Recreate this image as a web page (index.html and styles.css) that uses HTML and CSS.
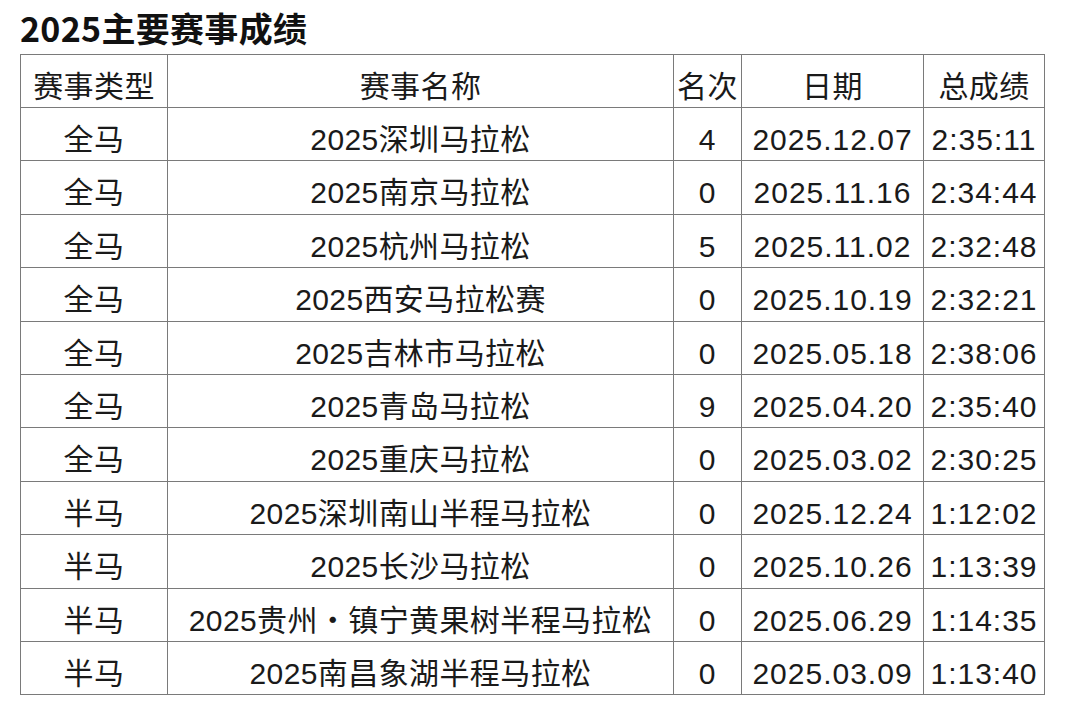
FILE: index.html
```html
<!DOCTYPE html>
<html lang="zh-CN">
<head>
<meta charset="utf-8">
<title>2025主要赛事成绩</title>
<link rel="stylesheet" href="styles.css">
</head>
<body>
<div class="page">
  <h1 class="title">2025主要赛事成绩</h1>
  <table class="results">
    <colgroup>
      <col class="c-type"><col class="c-name"><col class="c-rank"><col class="c-date"><col class="c-time">
    </colgroup>
    <thead>
      <tr><th>赛事类型</th><th>赛事名称</th><th>名次</th><th>日期</th><th>总成绩</th></tr>
    </thead>
    <tbody>
      <tr><td>全马</td><td>2025深圳马拉松</td><td class="num">4</td><td class="num">2025.12.07</td><td class="num">2:35:11</td></tr>
      <tr><td>全马</td><td>2025南京马拉松</td><td class="num">0</td><td class="num">2025.11.16</td><td class="num">2:34:44</td></tr>
      <tr><td>全马</td><td>2025杭州马拉松</td><td class="num">5</td><td class="num">2025.11.02</td><td class="num">2:32:48</td></tr>
      <tr><td>全马</td><td>2025西安马拉松赛</td><td class="num">0</td><td class="num">2025.10.19</td><td class="num">2:32:21</td></tr>
      <tr><td>全马</td><td>2025吉林市马拉松</td><td class="num">0</td><td class="num">2025.05.18</td><td class="num">2:38:06</td></tr>
      <tr><td>全马</td><td>2025青岛马拉松</td><td class="num">9</td><td class="num">2025.04.20</td><td class="num">2:35:40</td></tr>
      <tr><td>全马</td><td>2025重庆马拉松</td><td class="num">0</td><td class="num">2025.03.02</td><td class="num">2:30:25</td></tr>
      <tr><td>半马</td><td>2025深圳南山半程马拉松</td><td class="num">0</td><td class="num">2025.12.24</td><td class="num">1:12:02</td></tr>
      <tr><td>半马</td><td>2025长沙马拉松</td><td class="num">0</td><td class="num">2025.10.26</td><td class="num">1:13:39</td></tr>
      <tr><td>半马</td><td>2025贵州・镇宁黄果树半程马拉松</td><td class="num">0</td><td class="num">2025.06.29</td><td class="num">1:14:35</td></tr>
      <tr><td>半马</td><td>2025南昌象湖半程马拉松</td><td class="num">0</td><td class="num">2025.03.09</td><td class="num">1:13:40</td></tr>
    </tbody>
  </table>
</div>
</body>
</html>
```
FILE: styles.css
```css
html, body {
  margin: 0;
  padding: 0;
  background: #ffffff;
}

.page {
  padding: 8px 0 0 20px;
}

.title {
  margin: 0 0 6px 0;
  font-family: "Noto Sans CJK SC", sans-serif;
  font-weight: 700;
  font-size: 34px;
  line-height: 40px;
  color: #111111;
  letter-spacing: 0.3px;
}

.results {
  border-collapse: collapse;
  table-layout: fixed;
  width: 1024px;
  font-family: "Liberation Sans", "Noto Sans CJK SC", sans-serif;
  font-size: 30px;
  color: #1a1a1a;
  letter-spacing: 0.4px;
}

.c-type { width: 147px; }
.c-name { width: 506px; }
.c-rank { width: 68px; }
.c-date { width: 182px; }
.c-time { width: 121px; }

.results tr {
  height: 53.4px;
}

.results thead tr {
  height: 53px;
}

.results th,
.results td {
  border: 1px solid #7a7a7a;
  padding: 17px 0 0 0;
  text-align: center;
  vertical-align: top;
  white-space: nowrap;
  font-weight: 400;
  line-height: 30px;
}

.results td.num {
  letter-spacing: 1px;
}
```
